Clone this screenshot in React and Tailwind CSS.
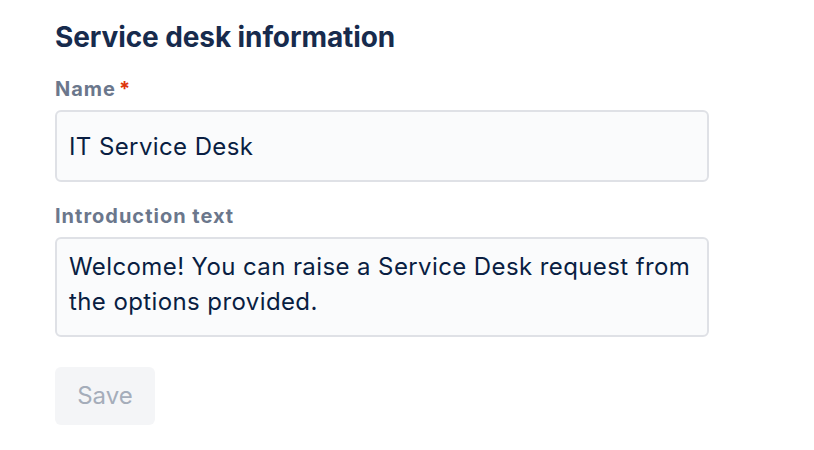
export default function App() {
  const font = { fontFamily: 'Inter, "Liberation Sans", sans-serif' };
  return (
    <div className="min-h-[450px] w-[814px] bg-white pl-[55px] pt-[20px]" style={font}>
      <div className="flex w-[654px] flex-col">
        <h2 className="h-[34px] text-[28px] font-bold leading-[34px] tracking-[-0.1px] text-[#172B4D]">Service desk information</h2>
        <label className="mt-[23px] flex h-[24px] items-center text-[20px] font-bold leading-[24px] tracking-[1px] text-[#6B778C]">
          Name<span className="ml-[3px] text-[#DE350B]">*</span>
        </label>
        <input
          readOnly
          value="IT Service Desk"
          className="mt-[9px] h-[72px] w-full rounded-[6px] border-2 border-[#DFE1E6] bg-[#FAFBFC] px-[12px] text-[24px] tracking-[0.4px] text-[#091E42] outline-none"
        />
        <label className="mt-[22px] flex h-[24px] items-center text-[20px] font-bold leading-[24px] tracking-[1px] text-[#6B778C]">
          Introduction text
        </label>
        <textarea
          readOnly
          value="Welcome! You can raise a Service Desk request from the options provided."
          className="mt-[9px] h-[100px] w-full resize-none overflow-hidden rounded-[6px] border-2 border-[#DFE1E6] bg-[#FAFBFC] px-[12px] py-[10px] text-[24px] leading-[35px] tracking-[0.4px] text-[#091E42] outline-none"
        />
        <button className="mt-[30px] h-[58px] w-[100px] rounded-[6px] bg-[#F4F5F7] text-[24px] text-[#A5ADBA]">
          Save
        </button>
      </div>
    </div>
  );
}
